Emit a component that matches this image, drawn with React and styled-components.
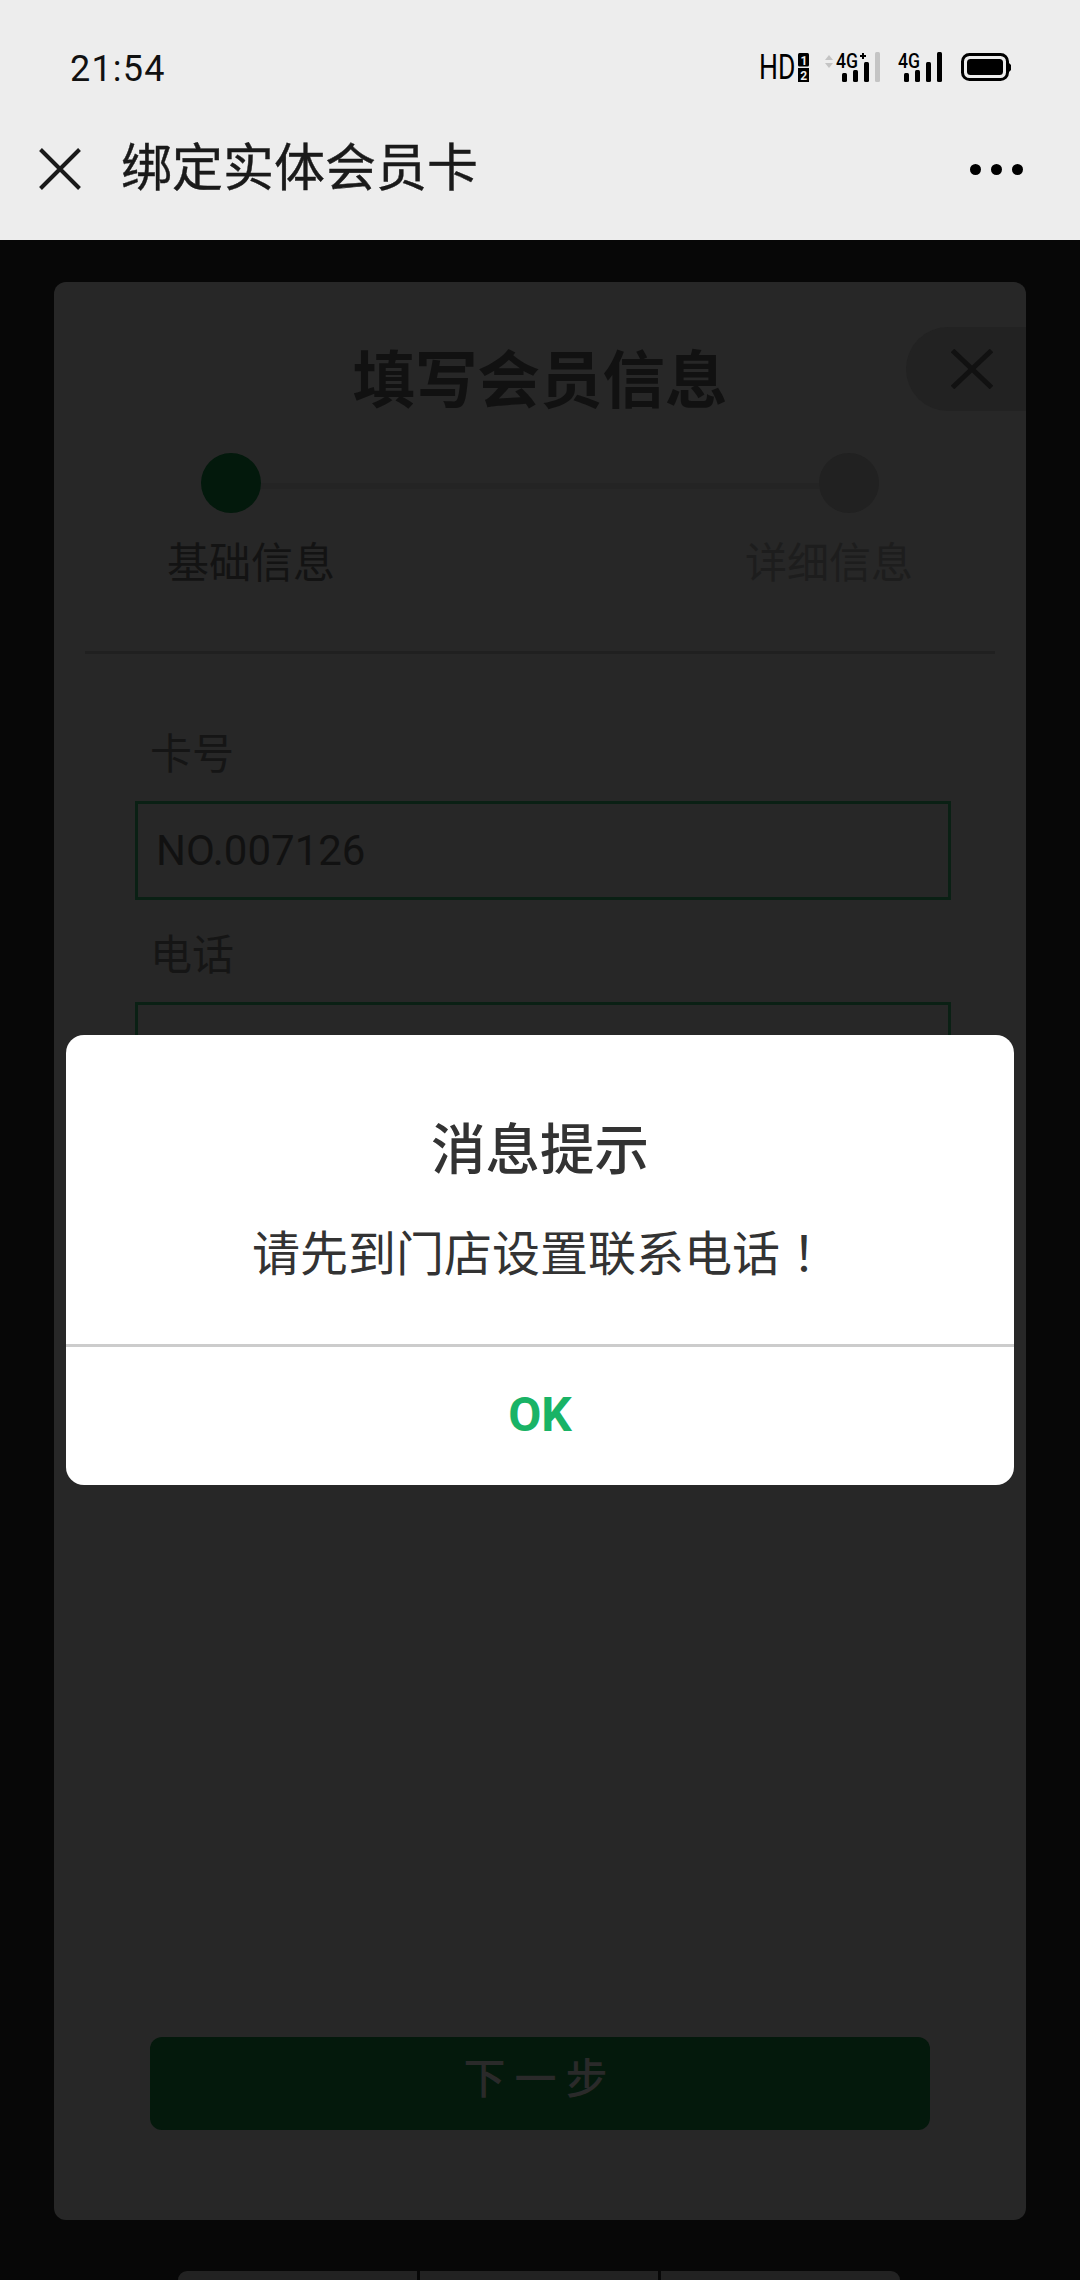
import React from "react";
import styled, { createGlobalStyle } from "styled-components";

const GlobalStyle = createGlobalStyle`
	html, body {
		margin: 0;
		padding: 0;
		background: #070707;
	}
	* {
		box-sizing: border-box;
	}
`;

const FONT = `Roboto, "Noto Sans CJK SC", sans-serif`;

const Page = styled.div`
	position: relative;
	width: 1080px;
	height: 2280px;
	overflow: hidden;
	background: #070707;
	font-family: ${FONT};
`;

const Header = styled.header`
	height: 240px;
	background: #ededed;
`;

const StatusBar = styled.div`
	display: flex;
	justify-content: space-between;
	align-items: flex-start;
	height: 98px;
	padding: 47px 69px 0 70px;
`;

const Time = styled.span`
	font-size: 36px;
	line-height: 44px;
	letter-spacing: 1.2px;
	color: #111;
`;

const StatusIcons = styled.div`
	display: flex;
	align-items: flex-start;
	height: 50px;
	margin-top: -5px;
	gap: 18px;
`;

const IconSvg = styled.svg`
	display: block;
	margin-left: ${(p) => p.$shift || 0}px;
`;

const StatusText = styled.text`
	font-family: "Roboto", sans-serif;
	font-weight: ${(p) => p.$weight || 500};
	fill: ${(p) => (p.$inverse ? "#ededed" : "#000")};
`;

const NavBar = styled.div`
	display: flex;
	align-items: center;
	height: 142px;
	padding: 0 57px 0 39px;
`;

const NavTitle = styled.h1`
	flex: 1;
	margin: 0 0 0 40px;
	font-size: 51px;
	line-height: 60px;
	font-weight: 400;
	-webkit-text-stroke: 0.4px #1a1a1a;
	color: #1a1a1a;
`;

const Dots = styled.div`
	display: flex;
	gap: 10px;
`;

const Dot = styled.span`
	width: 11px;
	height: 11px;
	border-radius: 50%;
	background: #000;
`;

const Card = styled.section`
	position: relative;
	display: flex;
	flex-direction: column;
	height: 1938px;
	margin: 42px 54px 0;
	border-radius: 12px;
	background: #272727;
`;

const CloseTab = styled.div`
	position: absolute;
	top: 45px;
	right: 0;
	display: flex;
	align-items: center;
	width: 120px;
	height: 84px;
	padding-left: 45px;
	border-radius: 42px 0 0 42px;
	background: #222;
`;

const CardTitle = styled.h2`
	margin: 64px 0 0;
	font-size: 62.5px;
	line-height: 72px;
	font-weight: 700;
	text-align: center;
	color: #111;
`;

const StepTrack = styled.div`
	display: flex;
	align-items: flex-start;
	margin: 35px 147px 0;
`;

const StepDot = styled.span`
	flex: none;
	width: 60px;
	height: 60px;
	border-radius: 50%;
	background: ${(p) => (p.$active ? "#03190c" : "#212121")};
`;

const StepLine = styled.span`
	flex: 1;
	height: 6px;
	margin-top: 30px;
	background: #242424;
`;

const StepLabels = styled.div`
	display: flex;
	justify-content: space-between;
	margin-top: 26px;
	padding: 0 113px 0 113px;
`;

const StepLabel = styled.span`
	font-size: 42px;
	line-height: 50px;
	color: ${(p) => (p.$active ? "#131313" : "#1d1d1d")};
`;

const Divider = styled.hr`
	height: 3px;
	margin: 62px 31px 0 31px;
	border: none;
	background: #202020;
`;

const FieldList = styled.div`
	display: flex;
	flex-direction: column;
	gap: 31px;
	margin: 76px 75px 0 81px;
`;

const FieldLabel = styled.label`
	display: block;
	margin: 0 0 21px 15px;
	font-size: 42px;
	line-height: 50px;
	color: #151515;
`;

const FieldBox = styled.div`
	height: 99px;
	padding: 0 18px;
	border: 3px solid #0a2014;
	font-size: 42px;
	line-height: 93px;
	color: #111;
`;

const NextButton = styled.button`
	height: 93px;
	margin: auto 96px 90px;
	padding: 0 0 16px;
	border: none;
	border-radius: 12px;
	background: #04190c;
	font-family: ${FONT};
	font-size: 42px;
	font-weight: 500;
	letter-spacing: 9px;
	color: #2a2a2a;
`;

const Tabs = styled.div`
	display: flex;
	gap: 3px;
	height: 9px;
	margin: 51px 180px 0 178px;
`;

const Tab = styled.span`
	flex: 1;
	background: #222;
	&:first-child {
		border-top-left-radius: 9px;
	}
	&:last-child {
		border-top-right-radius: 9px;
	}
`;

const Dialog = styled.div`
	position: absolute;
	top: 1035px;
	left: 66px;
	display: flex;
	flex-direction: column;
	width: 948px;
	height: 450px;
	border-radius: 18px;
	background: #fff;
`;

const DialogBody = styled.div`
	height: 312px;
	padding-top: 83px;
	border-bottom: 3px solid #ccc;
	text-align: center;
	color: #333;
`;

const DialogTitle = styled.h3`
	margin: 0;
	font-size: 54.5px;
	line-height: 64px;
	font-weight: 500;
`;

const DialogText = styled.p`
	margin: 43px 0 0;
	font-size: 48px;
	line-height: 60px;
`;

// the reference shows the centred form of this glyph, which the SC face doesn't have
const Bang = styled.span`
	font-family: "Noto Sans CJK TC", sans-serif;
	line-height: 0;
`;

const DialogAction = styled.div`
	display: flex;
	flex: 1;
	align-items: center;
	justify-content: center;
	padding-bottom: 4px;
	font-size: 48px;
	font-weight: 700;
	color: #19b366;
`;

const Cross = ({ size, height, color, stroke }) => (
	<svg width={size} height={height} viewBox={`0 0 ${size} ${height}`}>
		<path
			d={`M1.5 1.5 L${size - 1.5} ${height - 1.5} M${size - 1.5} 1.5 L1.5 ${height - 1.5}`}
			stroke={color}
			strokeWidth={stroke}
			fill="none"
		/>
	</svg>
);

// status icons share a box that leaves room around the text boxes
const StatusIcon = ({ width, shift, children }) => (
	<IconSvg width={width} height="50" viewBox={`0 -10 ${width} 50`} $shift={shift}>
		{children}
	</IconSvg>
);

const HdIcon = () => (
	<StatusIcon width={50}>
		<g transform="translate(0 0) scale(0.76 1)">
			<StatusText x="0" y="27" fontSize="35" $weight={400}>
				HD
			</StatusText>
		</g>
		<rect x="39" y="1" width="11" height="13.5" rx="1.5" />
		<rect x="39" y="16" width="11" height="14" />
		<StatusText x="41.5" y="12.5" fontSize="12" $weight={700} $inverse>
			1
		</StatusText>
		<StatusText x="41.2" y="28" fontSize="12" $weight={700} $inverse>
			2
		</StatusText>
	</StatusIcon>
);

const SignalBars = ({ x, dimLast }) => (
	<g>
		<rect x={x} y="21" width="5" height="9" rx="1.5" />
		<rect x={x + 11} y="18" width="5" height="12" rx="1.5" />
		<rect x={x + 22} y="10" width="5" height="20" rx="1.5" />
		<rect x={x + 33} y="0" width="5" height="30" rx="1.5" fill={dimLast ? "#c4c4c4" : "#000"} />
	</g>
);

const SignalPlusIcon = () => (
	<StatusIcon width={56} shift={-3}>
		<path d="M1 8 L5 3 L9 8 Z M1 11 L5 16 L9 11 Z" fill="#c4c4c4" />
		<g transform="translate(12 0) scale(0.88 1)">
			<StatusText x="0" y="16" fontSize="20">
				4G
			</StatusText>
		</g>
		<path d="M36 4 H42 M39 1 V7" stroke="#000" strokeWidth="2" />
		<SignalBars x={18} dimLast />
	</StatusIcon>
);

const SignalIcon = () => (
	<StatusIcon width={44}>
		<g transform="scale(0.88 1)">
			<StatusText x="0" y="16" fontSize="20">
				4G
			</StatusText>
		</g>
		<SignalBars x={6} />
	</StatusIcon>
);

const BatteryIcon = () => (
	<StatusIcon width={50} shift={1}>
		<rect x="1.5" y="2.5" width="45" height="25" rx="7" fill="none" stroke="#000" strokeWidth="3" />
		<rect x="6" y="7" width="36" height="16" rx="3.5" />
		<path d="M48 11 L50 13 V18 L48 20 Z" />
	</StatusIcon>
);

const App = () => {
	return (
		<Page>
			<GlobalStyle />
			<Header>
				<StatusBar>
					<Time>21:54</Time>
					<StatusIcons>
						<HdIcon />
						<SignalPlusIcon />
						<SignalIcon />
						<BatteryIcon />
					</StatusIcons>
				</StatusBar>
				<NavBar>
					<Cross size={42} height={42} color="#1a1a1a" stroke={4} />
					<NavTitle>绑定实体会员卡</NavTitle>
					<Dots>
						<Dot />
						<Dot />
						<Dot />
					</Dots>
				</NavBar>
			</Header>

			<Card>
				<CloseTab>
					<Cross size={42} height={40} color="#111" stroke={5} />
				</CloseTab>
				<CardTitle>填写会员信息</CardTitle>
				<StepTrack>
					<StepDot $active />
					<StepLine />
					<StepDot />
				</StepTrack>
				<StepLabels>
					<StepLabel $active>基础信息</StepLabel>
					<StepLabel>详细信息</StepLabel>
				</StepLabels>
				<Divider />
				<FieldList>
					<div>
						<FieldLabel>卡号</FieldLabel>
						<FieldBox>NO.007126</FieldBox>
					</div>
					<div>
						<FieldLabel>电话</FieldLabel>
						<FieldBox />
					</div>
				</FieldList>
				<NextButton>下一步</NextButton>
			</Card>

			<Tabs>
				<Tab />
				<Tab />
				<Tab />
			</Tabs>

			<Dialog>
				<DialogBody>
					<DialogTitle>消息提示</DialogTitle>
					<DialogText>
						请先到门店设置联系电话<Bang>！</Bang>
					</DialogText>
				</DialogBody>
				<DialogAction>OK</DialogAction>
			</Dialog>
		</Page>
	);
};

export default App;
